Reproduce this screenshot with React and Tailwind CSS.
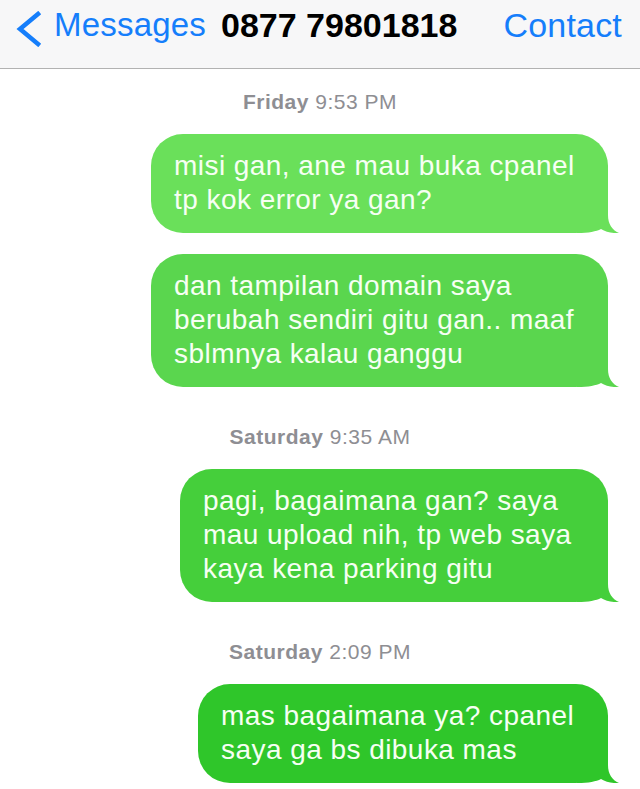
import React from 'react';

const font = { fontFamily: '"Liberation Sans", Arial, sans-serif' };

const messages = [
  { stamp: ['Friday', '9:53 PM'] },
  { lines: ['misi gan, ane mau buka cpanel', 'tp kok error ya gan?'], w: 'w-[457px]', color: '#6ae05a', bg: 'bg-[#6ae05a]' },
  { lines: ['dan tampilan domain saya', 'berubah sendiri gitu gan.. maaf', 'sblmnya kalau ganggu'], w: 'w-[457px]', color: '#5ad64e', bg: 'bg-[#5ad64e]' },
  { stamp: ['Saturday', '9:35 AM'] },
  { lines: ['pagi, bagaimana gan? saya', 'mau upload nih, tp web saya', 'kaya kena parking gitu'], w: 'w-[428px]', color: '#45cf3b', bg: 'bg-[#45cf3b]' },
  { stamp: ['Saturday', '2:09 PM'] },
  { lines: ['mas bagaimana ya? cpanel', 'saya ga bs dibuka mas'], w: 'w-[410px]', color: '#2fc62a', bg: 'bg-[#2fc62a]' },
];

function Tail({ color }) {
  return (
    <svg className="absolute right-[-11px] bottom-0" width="42" height="38" viewBox="0 0 42 38">
      <path d="M31 0 L31 20 C31 29 35 35 42 38 C35 38.5 29 37 24 34 C19 36.5 12 38 0 38 L0 0 Z" fill={color} />
    </svg>
  );
}

function Bubble({ m }) {
  return (
    <div className={`relative self-end mr-[32px] ${m.w} ${m.bg} rounded-[32px] pl-[23px] pr-[16px] pt-[15px] pb-[16px]`}>
      <Tail color={m.color} />
      <div className="relative text-[28px] leading-[34px] tracking-[0.45px] text-[#f6fff3]">
        {m.lines.map((l) => (
          <div key={l} className="whitespace-nowrap">{l}</div>
        ))}
      </div>
    </div>
  );
}

export default function App() {
  return (
    <div className="w-[640px] h-[789px] bg-white overflow-hidden flex flex-col" style={font}>
      <div className="h-[69px] shrink-0 bg-[#f7f7f8] border-b border-[#b2b2b2] flex items-start pt-[8px]">
        <svg className="ml-[13px] mt-[3px]" width="30" height="36" viewBox="0 0 30 36">
          <polyline points="25,3 7,18 25,33" fill="none" stroke="#157efb" strokeWidth="4.5" strokeLinecap="square" strokeLinejoin="miter" />
        </svg>
        <span className="ml-[11px] text-[33px] leading-[34px] text-[#157efb] tracking-[0.2px]">Messages</span>
        <span className="ml-[15px] text-[34px] leading-[34px] font-bold text-black">0877 79801818</span>
        <span className="ml-auto mr-[18px] text-[34px] leading-[34px] text-[#157efb] tracking-[0.2px]">Contact</span>
      </div>
      <div className="flex flex-col">
        {messages.map((m, i) =>
          m.stamp ? (
            <div
              key={i}
              className={`text-center text-[21px] leading-[22px] tracking-[0.5px] text-[#8e8e93] ${i === 0 ? 'mt-[22px]' : 'mt-[39px]'} mb-[21px]`}
            >
              <span className="font-bold">{m.stamp[0]}</span> {m.stamp[1]}
            </div>
          ) : (
            <div key={i} className={`flex flex-col ${messages[i - 1].stamp ? '' : 'mt-[21px]'}`}>
              <Bubble m={m} />
            </div>
          )
        )}
      </div>
    </div>
  );
}
